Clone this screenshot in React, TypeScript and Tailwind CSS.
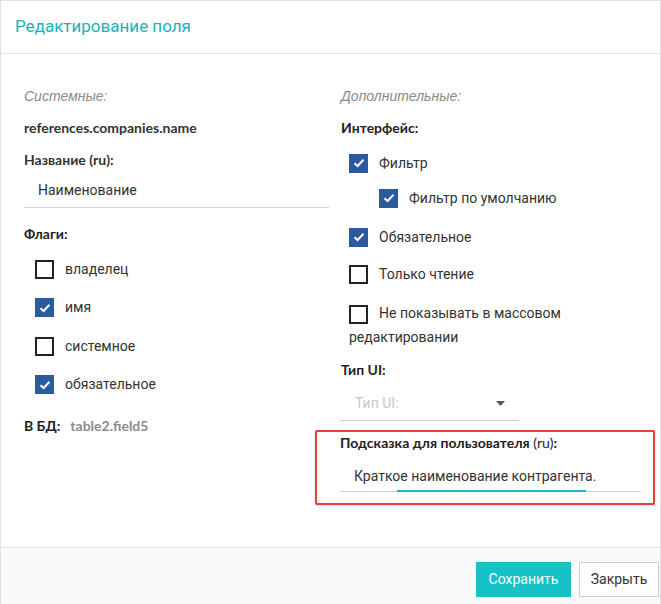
import React from "react";

const Box = ({ checked }: { checked: boolean }) =>
  checked ? (
    <span className="inline-flex w-[19px] h-[19px] bg-[#2b5b9e] items-center justify-center shrink-0 align-middle">
      <svg width="12" height="10" viewBox="0 0 12 10">
        <path d="M1.5 5.2 L4.6 8 L10.5 1.8" stroke="white" strokeWidth="2" fill="none" />
      </svg>
    </span>
  ) : (
    <span className="inline-block w-[19px] h-[19px] border-2 border-[#222] shrink-0 align-middle" />
  );

const Check = ({ checked, label, cls }: { checked: boolean; label: string; cls?: string }) => (
  <div className={"flex items-center h-[24px] " + (cls || "")}>
    <Box checked={checked} />
    <span className="ml-[11px] text-[14px] text-[#333] font-['Roboto',sans-serif]">{label}</span>
  </div>
);

export default function App() {
  return (
    <div className="w-[661px] h-[604px] flex flex-col bg-white border-x border-t border-[#e2e2e2] font-['Lato',sans-serif] overflow-hidden">
      <div className="h-[53px] shrink-0 border-b border-[#e2e2e2] flex items-center px-[14px] pb-[1px]">
        <span className="text-[17px] text-[#19b3b8] font-['Roboto',sans-serif]">Редактирование поля</span>
      </div>
      <div className="flex-1 flex">
        <div className="w-[328px] pl-[23px] pt-[34px] flex flex-col">
          <div className="text-[14px] leading-[17px] italic text-[#8a8a8a] font-['Liberation_Sans',sans-serif]">Системные:</div>
          <div className="mt-[14px] text-[14px] leading-[17px] font-bold text-[#333]">references.companies.name</div>
          <div className="mt-[15px] text-[14px] leading-[17px] font-bold text-[#333]">Название (ru):</div>
          <div className="mt-[5px] h-[35px] border-b border-[#d0d0d0] flex items-center pl-[14px] text-[14px] text-[#333] font-['Roboto',sans-serif]">Наименование</div>
          <div className="mt-[17px] text-[14px] leading-[17px] font-bold text-[#222]">Флаги:</div>
          <div className="pl-[11px] mt-[15px] flex flex-col gap-[14.5px]">
            <Check checked={false} label="владелец" />
            <Check checked={true} label="имя" />
            <Check checked={false} label="системное" />
            <Check checked={true} label="обязательное" />
          </div>
          <div className="mt-[20px] text-[14px] leading-[17px] font-bold flex">
            <span className="text-[#222]">В БД:</span>
            <span className="ml-[10px] text-[#8c8c8c]">table2.field5</span>
          </div>
        </div>
        <div className="flex-1 pl-[12px] pr-[4px] pt-[34px] flex flex-col">
          <div className="text-[14px] leading-[17px] italic text-[#8a8a8a] font-['Liberation_Sans',sans-serif]">Дополнительные:</div>
          <div className="mt-[14px] text-[14px] leading-[17px] font-bold text-[#222]">Интерфейс:</div>
          <div className="pl-[8px] mt-[15px] flex flex-col">
            <Check checked={true} label="Фильтр" />
            <Check checked={true} label="Фильтр по умолчанию" cls="ml-[30px] mt-[11px]" />
            <Check checked={true} label="Обязательное" cls="mt-[15px]" />
            <Check checked={false} label="Только чтение" cls="mt-[13px]" />
            <div className="mt-[15px] w-[215px] text-[14px] leading-[24px] text-[#333] font-['Roboto',sans-serif]">
              <Box checked={false} />
              <span className="ml-[11px]">Не показывать в массовом редактировании</span>
            </div>
          </div>
          <div className="mt-[12px] text-[14px] leading-[17px] font-bold text-[#222]">Тип UI:</div>
          <div className="mt-[8px] ml-[-2px] w-[180px] h-[35px] border-b border-[#cfcfcf] flex items-center pl-[16px] pr-[14px] justify-between">
            <span className="text-[14px] text-[#c8c8c8] font-['Roboto',sans-serif]">Тип UI:</span>
            <svg width="9" height="5" viewBox="0 0 9 5"><path d="M0 0 L9 0 L4.5 5 Z" fill="#555" /></svg>
          </div>
          <div className="mt-[9px] ml-[-26px] mr-[1px] h-[75px] border-2 border-[#e5413a] rounded-[2px] shadow-[0_1px_3px_rgba(0,0,0,0.15)] pl-[23px] pr-[12px] pt-[2px]">
            <div className="text-[14px] leading-[17px] font-bold text-[#222]">
              Подсказка для пользователя <span className="font-normal">(ru)</span>:
            </div>
            <div className="relative mt-[6px] h-[35px] border-b border-[#d0d0d0] flex items-center pl-[14px] pt-[5px] text-[14px] text-[#333] font-['Roboto',sans-serif]">
              Краткое наименование контрагента.
              <div className="absolute left-[57px] w-[189px] bottom-[-1px] h-[2px] bg-[#19b8c4]" />
            </div>
          </div>
        </div>
      </div>
      <div className="h-[57px] shrink-0 border-t border-[#e2e2e2] bg-[#f9fafb] flex items-start justify-end pt-[14px] pr-[1px] gap-[8px] font-['Roboto',sans-serif]">
        <button className="w-[95px] h-[35px] bg-[#16c2c8] text-white text-[14px]">Сохранить</button>
        <button className="w-[80px] h-[35px] bg-white border border-[#cfcfcf] text-[#333] text-[14px]">Закрыть</button>
      </div>
    </div>
  );
}
